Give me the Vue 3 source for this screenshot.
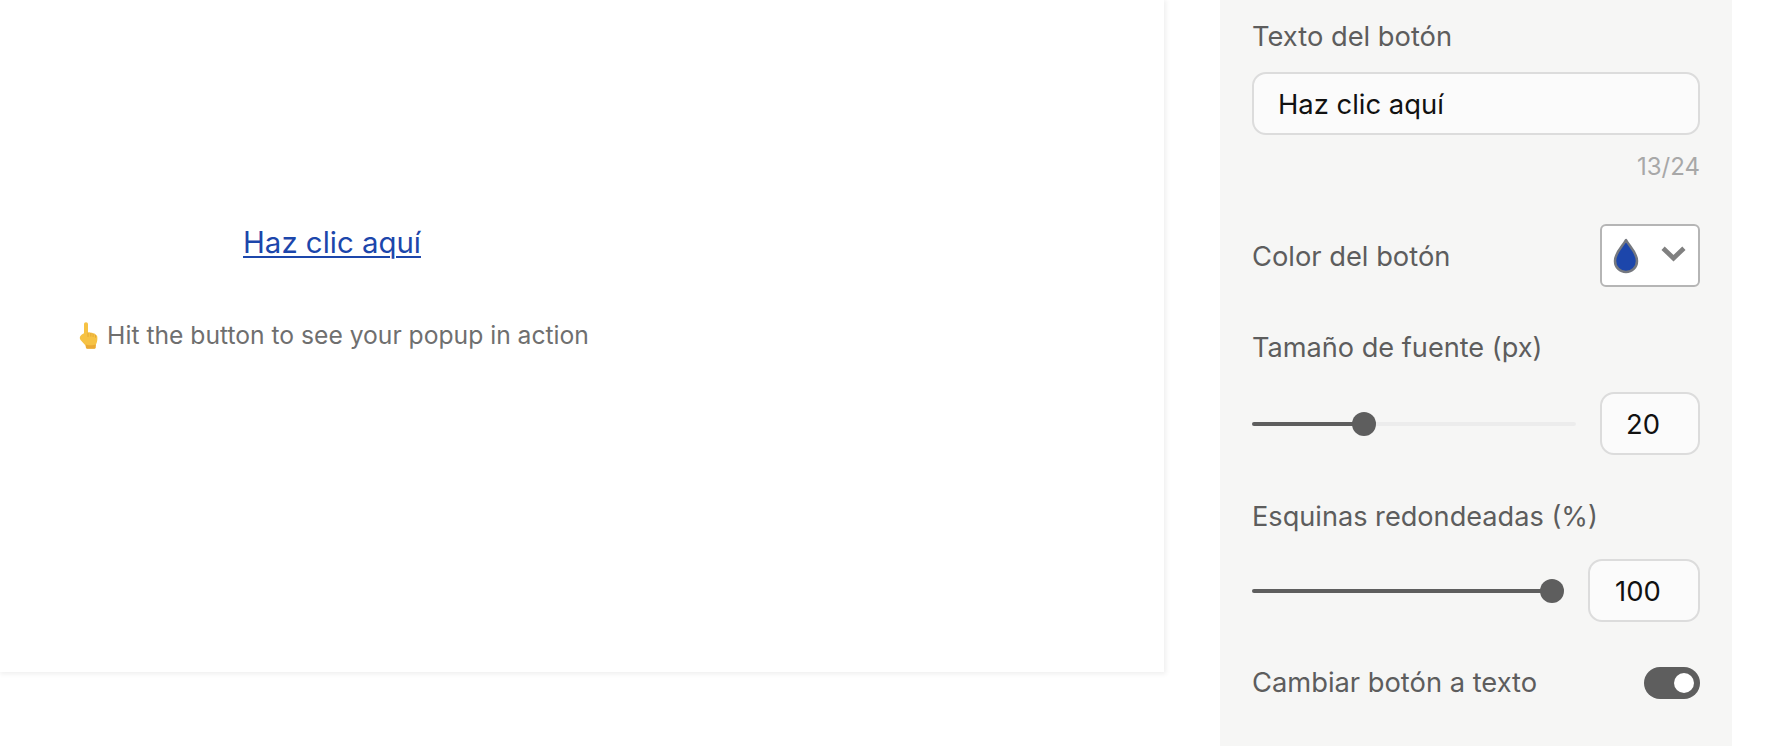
<script setup>
const sliders = [
  { label: 'Tamaño de fuente (px)', value: 20, pct: 34.5, cls: 'narrow' },
  { label: 'Esquinas redondeadas (%)', value: 100, pct: 100, cls: 'wide' },
]
</script>

<template>
  <div class="page">
    <main class="main">
      <section class="card">
        <div class="preview">
          <a class="link">Haz clic aquí</a>
          <p class="hint">
            <svg class="hand" viewBox="0 0 20 27" aria-hidden="true">
              <path d="M5 2.200C5 .9 5.800 .2 7 .2s2 .7 2 2v8.200l1.600-.2c.6 0 1 .3 1.200.7.5-.3 1.200-.3 1.700 0 .3.100.5.4.6.7.6-.2 1.300-.2 1.800.2.4.3.6.7.6 1.100.8-.1 1.500.5 1.700 1.400.4 2.400.2 5.200-.9 7.400-.6 1.100-.8 2-.8 3.600 0 .8-.5 1.200-1.200 1.200H8.200c-.7 0-1.200-.4-1.300-1.200-.2-1.400-.7-2.200-1.700-3.200L2 18.500C.8 17.200.5 15.800 1.100 14.600c.6-1.300 2-2.600 3.900-3.400z" fill="#f6c244"/>
              <path d="M9 11v3.500M11.800 11.200v3M14.100 11.800v2.800M16.500 13v2.300" stroke="#e0a232" stroke-width=".8" fill="none" stroke-linecap="round"/>
              <path d="M7 22.500c1.500 1 7 1 10 0-.3 1-.4 1.800-.4 3 0 .8-.5 1.200-1.200 1.200H8.200c-.7 0-1.200-.4-1.300-1.200z" fill="#eaa935"/>
            </svg>
            <span>Hit the button to see your popup in action</span>
          </p>
        </div>
      </section>
    </main>

    <aside class="panel">
      <div class="field text-field">
        <label class="label">Texto del botón</label>
        <div class="box text-box">Haz clic aquí</div>
        <div class="count">13/24</div>
      </div>

      <div class="row color-row">
        <span class="label">Color del botón</span>
        <div class="swatch">
          <svg class="drop" viewBox="0 0 26 36" aria-hidden="true">
            <path d="M13 2C10 8 2 14 2 23c0 6.500 5 11 11 11s11-4.500 11-11C24 14 16 8 13 2z" fill="#1c46ab" stroke="#75787f" stroke-width="2.500" stroke-linejoin="round"/>
          </svg>
          <svg class="chev" viewBox="0 0 24 16" aria-hidden="true">
            <path d="M2 3l10 9.500L22 3" fill="none" stroke="#808080" stroke-width="4.500"/>
          </svg>
        </div>
      </div>

      <div v-for="s in sliders" :key="s.label" class="field slider-field" :class="s.cls">
        <span class="label">{{ s.label }}</span>
        <div class="slider-row">
          <div class="track">
            <div class="fill" :style="{ width: s.pct + '%' }"><span class="thumb"></span></div>
          </div>
          <div class="box num-box">{{ s.value }}</div>
        </div>
      </div>

      <div class="row toggle-row">
        <span class="label">Cambiar botón a texto</span>
        <div class="toggle"><span class="knob"></span></div>
      </div>
    </aside>
  </div>
</template>

<style>
html, body { margin: 0; background: #fff; }
</style>

<style scoped>
.page {
  display: grid;
  grid-template-columns: 1220px 512px 40px;
  height: 746px;
  overflow: hidden;
  font-family: Inter, "Noto Sans", sans-serif;
  background: #fff;
}
.main { min-width: 0; }
.card {
  width: 1164px;
  height: 672px;
  background: #fff;
  box-shadow: 1px 1px 5px 1px #efefef;
}
.preview {
  width: 664px;
  padding-top: 224px;
  display: flex;
  flex-direction: column;
  align-items: center;
}
.link {
  font-size: 29.400px;
  line-height: 38px;
  color: #1c46ab;
  text-decoration: underline;
  text-underline-offset: 3px;
  text-decoration-thickness: 2px;
}
.hint {
  display: flex;
  align-items: center;
  gap: 8px;
  margin: 58px 0 0;
  padding-left: 4px;
  font-size: 24.650px;
  line-height: 30px;
  color: #6f6f6f;
}
.hand { width: 20px; height: 27px; }

.panel {
  background: #f6f6f5;
  padding: 20px 32px 0;
  box-sizing: border-box;
}
.label {
  font-size: 27.300px;
  line-height: 34px;
  color: #5d5d5d;
  display: block;
}
.slider-field .label { font-size: 27.150px; }
.box {
  box-sizing: border-box;
  background: #fbfbfb;
  border: 2px solid #dcdcdc;
  border-radius: 14px;
  height: 63px;
  display: flex;
  align-items: center;
  font-size: 27.400px;
  color: #111;
}
.text-box { margin-top: 18px; padding-left: 24px; }
.count {
  text-align: right;
  font-size: 24px;
  line-height: 28px;
  margin-top: 18px;
  color: #a8a8a8;
}
.row {
  display: flex;
  align-items: center;
  justify-content: space-between;
}
.color-row { margin-top: 43px; }
.color-row .label { padding-top: 2px; }
.swatch {
  box-sizing: border-box;
  width: 100px;
  height: 63px;
  background: #fff;
  border: 2px solid #b5b5b5;
  border-radius: 6px;
  display: flex;
  align-items: center;
  justify-content: space-between;
  padding: 0 12px 0 11px;
}
.drop { width: 26px; height: 36px; }
.chev { width: 25px; height: 17px; margin-bottom: 4px; }
.narrow { margin-top: 44px; }
.wide { margin-top: 45px; }
.slider-row {
  display: flex;
  align-items: center;
  justify-content: space-between;
}
.narrow .slider-row { margin-top: 27px; }
.wide .slider-row { margin-top: 25px; }
.track {
  flex: 1;
  height: 4px;
  background: #ececec;
  border-radius: 2px;
  margin-right: 24px;
}
.wide .track { margin-right: 36px; }
.fill {
  position: relative;
  height: 100%;
  background: #5e5e5e;
  border-radius: 2px;
}
.thumb {
  position: absolute;
  right: -12px;
  top: -10px;
  width: 24px;
  height: 24px;
  border-radius: 50%;
  background: #5e5e5e;
}
.num-box { width: 100px; padding-left: 24px; }
.wide .num-box { width: 112px; padding-left: 25px; }
.toggle-row { margin-top: 44px; }
.toggle {
  box-sizing: border-box;
  width: 56px;
  height: 32px;
  border-radius: 16px;
  background: #5e5e5e;
  display: flex;
  align-items: center;
  justify-content: flex-end;
  padding-right: 6px;
}
.knob {
  width: 20px;
  height: 20px;
  border-radius: 50%;
  background: #fff;
}
</style>
